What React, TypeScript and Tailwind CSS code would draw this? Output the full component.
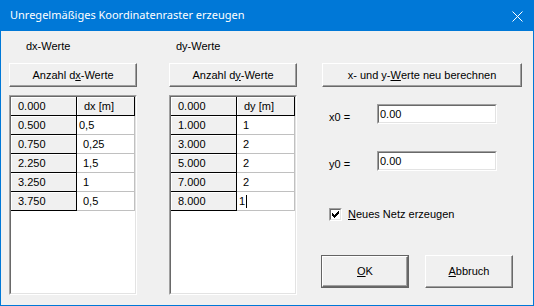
import React from "react";

const dxRows = [
  { k: "0.500", v: "0,5", pad: "pl-[2px]" },
  { k: "0.750", v: "0,25" },
  { k: "2.250", v: "1,5" },
  { k: "3.250", v: "1" },
  { k: "3.750", v: "0,5" },
];

const dyRows = [
  { k: "1.000", v: "1" },
  { k: "3.000", v: "2" },
  { k: "5.000", v: "2" },
  { k: "7.000", v: "2" },
  { k: "8.000", v: "1", pad: "pl-[2px]", caret: true },
];

type Row = { k: string; v: string; pad?: string; caret?: boolean };

const Btn = ({ children, className = "" }: { children: React.ReactNode; className?: string }) => (
  <div
    className={`flex items-center justify-center border border-t-white border-l-white border-r-[#696969] border-b-[#696969] bg-[#f0f0f0] shadow-[inset_-1px_-1px_0_#a0a0a0] ${className}`}
  >
    {children}
  </div>
);

const FixedCell = ({ children, w = "w-[66px]" }: { children: React.ReactNode; w?: string }) => (
  <div className={`${w} h-full border-r border-b border-black`}>
    <div className="flex h-full items-center border-t border-l border-white bg-[#f0f0f0] pl-[6px]">{children}</div>
  </div>
);

const Grid = ({ head, rows }: { head: string; rows: Row[] }) => (
  <div className="h-[200px] w-[128px] border border-t-[#a0a0a0] border-l-[#a0a0a0] border-r-white border-b-white">
    <div className="h-full w-full border border-t-[#696969] border-l-[#696969] border-r-[#e3e3e3] border-b-[#e3e3e3] bg-white">
      <div className="flex h-[19px]">
        <FixedCell>0.000</FixedCell>
        <FixedCell w="flex-1">{head}</FixedCell>
      </div>
      {rows.map((r) => (
        <div key={r.k} className="flex h-[19px]">
          <FixedCell>{r.k}</FixedCell>
          <div className={`flex flex-1 items-center border-r border-b border-[#c0c0c0] ${r.pad ?? "pl-[6px]"}`}>
            {r.v}
            {r.caret && <span className="ml-px h-[13px] w-px bg-black" />}
          </div>
        </div>
      ))}
    </div>
  </div>
);

const Edit = ({ value }: { value: string }) => (
  <div className="h-[20px] w-[120px] border border-t-[#a0a0a0] border-l-[#a0a0a0] border-r-white border-b-white">
    <div className="flex h-full items-center border border-t-[#696969] border-l-[#696969] border-r-[#e3e3e3] border-b-[#e3e3e3] bg-white pl-[1px]">
      {value}
    </div>
  </div>
);

export default function App() {
  return (
    <div className="flex h-[306px] w-[534px] flex-col bg-[#0078d7] font-['Liberation_Sans',Arial,sans-serif] text-[11px] text-black">
      {/* Title bar */}
      <div className="flex h-[31px] shrink-0 items-center justify-between pl-[10px] pr-[11px] text-white">
        <span className="font-['Noto_Sans',sans-serif] text-[11px]">Unregelmäßiges Koordinatenraster erzeugen</span>
        <svg width="11" height="11" viewBox="0 0 11 11" className="mt-px">
          <path d="M0.5 0.5 L10.5 10.5 M10.5 0.5 L0.5 10.5" stroke="white" strokeWidth="1" fill="none" />
        </svg>
      </div>

      {/* Body */}
      <div className="mx-px mb-px flex flex-1 bg-[#f0f0f0] pl-[8px]">
        {/* dx column */}
        <div className="flex w-[128px] flex-col pt-[9px]">
          <div className="pl-[17px] leading-[13px]">dx-Werte</div>
          <Btn className="mt-[10px] h-[24px]">
            Anzahl d<u>x</u>-Werte
          </Btn>
          <div className="mt-[8px]">
            <Grid head="dx [m]" rows={dxRows} />
          </div>
        </div>

        {/* dy column */}
        <div className="ml-[32px] flex w-[128px] flex-col pt-[9px]">
          <div className="pl-[7px] leading-[13px]">dy-Werte</div>
          <Btn className="mt-[10px] h-[24px]">
            Anzahl d<u>y</u>-Werte
          </Btn>
          <div className="mt-[8px]">
            <Grid head="dy [m]" rows={dyRows} />
          </div>
        </div>

        {/* Right column */}
        <div className="ml-[24px] flex w-[201px] flex-col pt-[32px]">
          <Btn className="ml-px h-[24px] w-[200px]">
            x- und y-<u>W</u>erte neu berechnen
          </Btn>
          <div className="mt-[17px] flex h-[20px] items-start">
            <span className="w-[56px] pl-[8px] pt-[7px] leading-[13px]">x0 =</span>
            <Edit value="0.00" />
          </div>
          <div className="mt-[27px] flex h-[20px] items-start">
            <span className="w-[56px] pl-[8px] pt-[7px] leading-[13px]">y0 =</span>
            <Edit value="0.00" />
          </div>
          <div className="ml-[8px] mt-[37px] flex h-[13px] items-center">
            <div className="h-[13px] w-[13px] border border-t-[#a0a0a0] border-l-[#a0a0a0] border-r-white border-b-white">
              <div className="flex h-full w-full items-center justify-center border border-t-[#696969] border-l-[#696969] border-r-[#e3e3e3] border-b-[#e3e3e3] bg-white">
                <svg width="7" height="7" viewBox="0 0 7 7" shapeRendering="crispEdges">
                  <polygon points="0,2 2,4 6,0 7,0 7,3 2,7 0,5" fill="black" />
                </svg>
              </div>
            </div>
            <span className="ml-[6px] leading-[13px]">
              <u>N</u>eues Netz erzeugen
            </span>
          </div>
          <div className="mt-[34px] flex gap-[16px]">
            <div className="h-[33px] w-[88px] border border-[#646464]">
              <Btn className="h-full w-full">
                <u>O</u>K
              </Btn>
            </div>
            <Btn className="h-[33px] w-[88px]">
              <u>A</u>bbruch
            </Btn>
          </div>
        </div>
      </div>
    </div>
  );
}
